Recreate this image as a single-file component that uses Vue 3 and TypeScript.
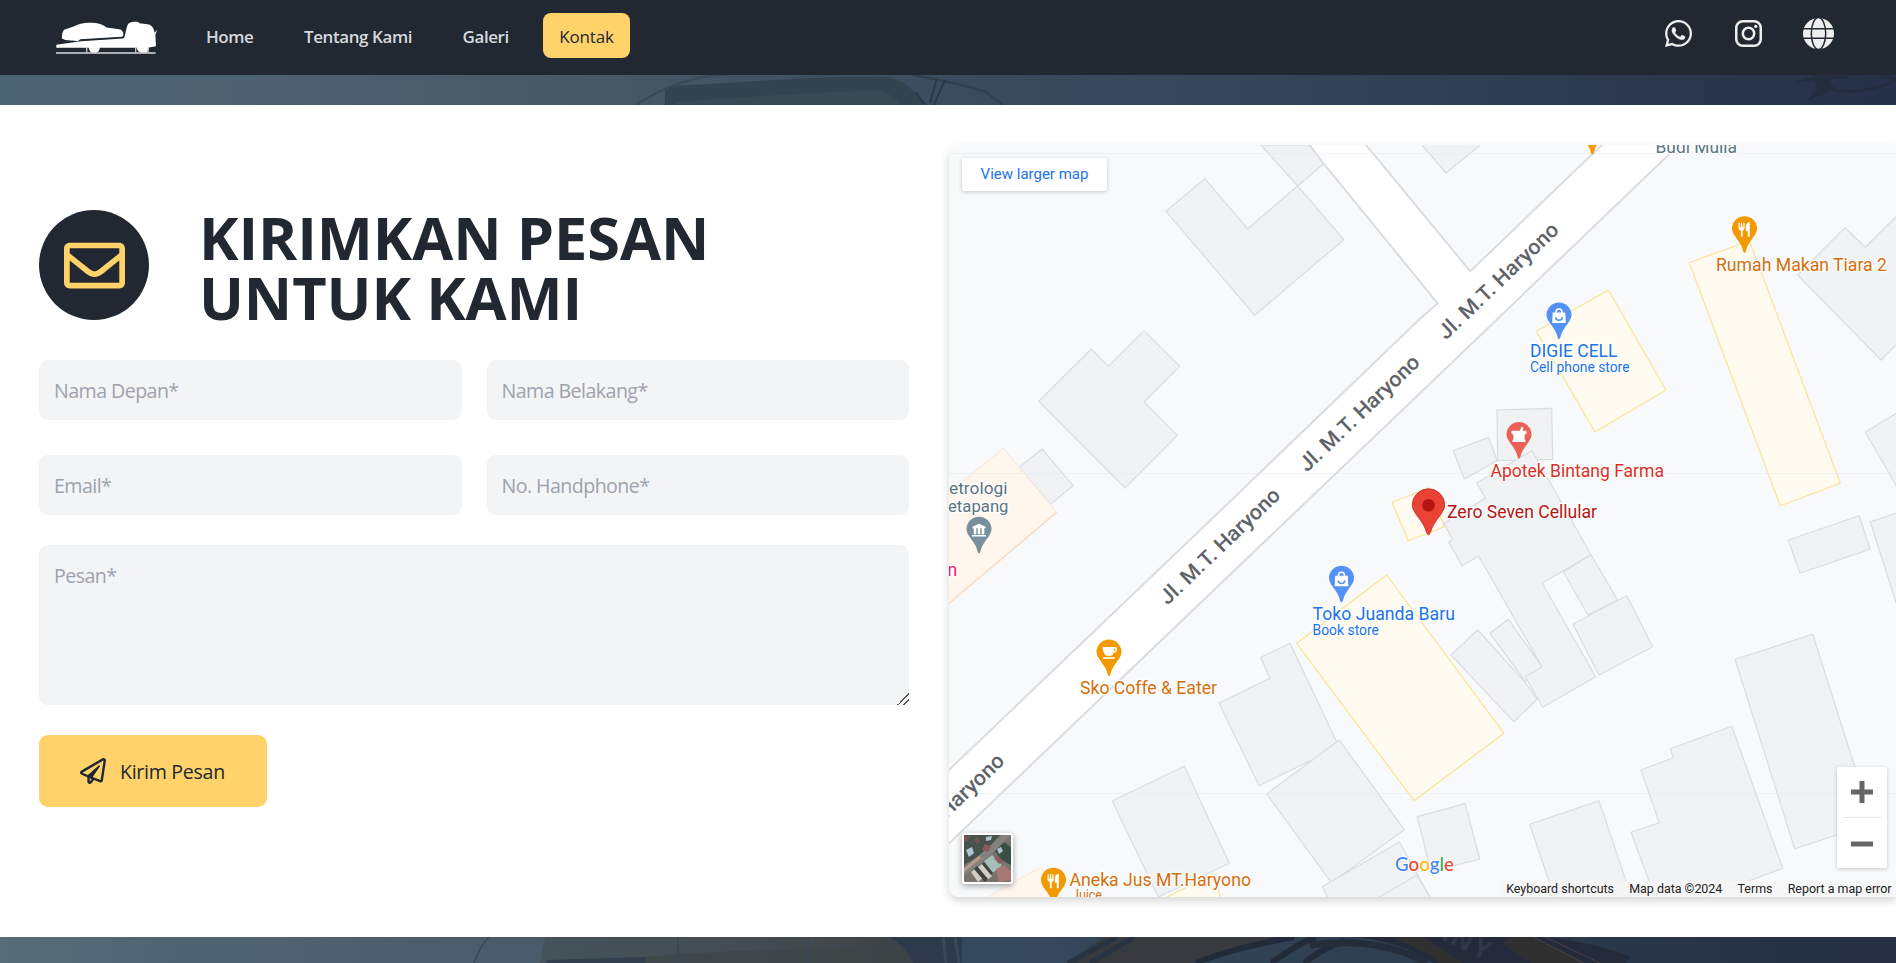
<script setup lang="ts">
interface NavItem { label: string; active?: boolean }
interface Shape { points: string; kind: 'building' | 'shop' | 'civic' }
interface Pin { x: number; y: number; tone: string; icon: 'food' | 'bag' | 'pharmacy' | 'cup' | 'museum' | 'none' }
interface Label { text: string; x: number; y: number; width: number; size: number; color: string }

const navItems: NavItem[] = [
  { label: 'Home' },
  { label: 'Tentang Kami' },
  { label: 'Galeri' },
  { label: 'Kontak', active: true },
]

const fields = [
  { name: 'first', type: 'text', placeholder: 'Nama Depan*' },
  { name: 'last', type: 'text', placeholder: 'Nama Belakang*' },
  { name: 'email', type: 'email', placeholder: 'Email*' },
  { name: 'phone', type: 'tel', placeholder: 'No. Handphone*' },
]

const shapes: Shape[] = [
  { kind: 'building', points: '1261,145 1308.7,145 1324.7,162.7 1297.7,186' },
  { kind: 'building', points: '1204.7,178.7 1247.7,228.7 1297.7,186 1343.7,239.7 1254.7,315.3 1166,211.3' },
  { kind: 'building', points: '1144,330.7 1179.7,366.3 1144,402 1177.3,435.3 1125,488 1038.7,401.3 1091.3,349 1108.3,366.3' },
  { kind: 'building', points: '1042,449 1073,485.7 1050.7,504 1019.3,467.3' },
  { kind: 'civic', points: '1003.3,448.3 1056.7,512.3 940,611 940,500' },
  { kind: 'building', points: '1422,140 1422,145 1446,173 1480.3,145 1480,140' },
  { kind: 'shop', points: '1608.3,290 1666,390 1595,432 1536.3,331.3' },
  { kind: 'building', points: '1797.7,275 1845,227.7 1865.3,247.3 1900,213 1900,341 1881,360' },
  { kind: 'shop', points: '1689.3,262.7 1749.3,240.7 1840.3,483.3 1780.3,505.7' },
  { kind: 'building', points: '1900,411 1865.3,432.3 1900,492' },
  { kind: 'building', points: '1497,410 1551.7,408.3 1552.7,459.3 1497.7,460.7' },
  { kind: 'building', points: '1453.3,450.7 1488.7,437.3 1497,460.7 1464.3,479' },
  { kind: 'shop', points: '1392,502.3 1429.3,487.7 1444.3,526.7 1408.3,540.7' },
  { kind: 'building', points: '1451,655 1477.7,630 1524.3,681.3 1537.3,699.3 1513.7,721.7' },
  { kind: 'building', points: '1490,633.3 1508.3,619.3 1542,666.7 1525.3,681.3' },
  { kind: 'building', points: '1532,450.7 1591,554.7 1542,583 1595.7,676.7 1542.7,707.3 1525.3,676.7 1542,666.7 1478.7,556 1462,565.7 1448.7,542 1452.7,539.7 1443.7,523.3 1485.3,498.3 1476.7,482.7' },
  { kind: 'building', points: '1563.3,571.7 1591,554.7 1617.7,600 1588,615' },
  { kind: 'building', points: '1573,624 1626.7,595.7 1652.7,646.7 1599,675' },
  { kind: 'building', points: '1788.3,540 1859.3,515.7 1870,549.3 1800,573.3' },
  { kind: 'building', points: '1900,512 1870.3,521.7 1900,615' },
  { kind: 'building', points: '1735,659.3 1812.7,634.3 1872.7,823.3 1794.7,848.7' },
  { kind: 'building', points: '1731.7,726.3 1782.7,868.3 1700,899 1656,899 1631,832.3 1659.3,822.7 1641,770 1673.3,757.7 1670.3,748.7' },
  { kind: 'building', points: '1529.7,824.3 1599,800.7 1632,899 1555,899' },
  { kind: 'building', points: '1417.3,816.7 1465,803.7 1479.7,859 1431,871.7' },
  { kind: 'building', points: '1260.7,657.3 1290,643.3 1339,746.7 1259,785.7 1219,703 1270,678.3' },
  { kind: 'building', points: '1266.7,794 1339.3,740 1404.3,829.7 1331.3,882.7' },
  { kind: 'building', points: '1322.3,886.7 1399.3,842 1431,899 1329,899' },
  { kind: 'building', points: '1376,899 1416.7,875.3 1431,899' },
  { kind: 'building', points: '1112.3,801 1184.3,766.3 1229.3,863.3 1158.3,897' },
  { kind: 'shop', points: '1386.7,575 1296.7,643.3 1414,800.7 1504,733.3' },
  { kind: 'shop', points: '1163,899 1213,874 1221.3,899' },
  { kind: 'civic', points: '984,899 1040.7,867.3 1060,899' },
]

const pins: Pin[] = [
  { x: 1592.3, y: 130.5, tone: '#f29900', icon: 'none' },
  { x: 1744.5, y: 228.7, tone: '#f29900', icon: 'food' },
  { x: 1559, y: 315, tone: '#5491f5', icon: 'bag' },
  { x: 1519, y: 434.5, tone: '#eb6156', icon: 'pharmacy' },
  { x: 1341.5, y: 578.2, tone: '#5491f5', icon: 'bag' },
  { x: 1109, y: 652, tone: '#f29900', icon: 'cup' },
  { x: 979, y: 529.2, tone: '#78909c', icon: 'museum' },
  { x: 1053.5, y: 880.2, tone: '#f29900', icon: 'food' },
]

const ORANGE = '#d56e0c'
const BLUE = '#1a73e8'
const labels: Label[] = [
  { text: 'Budi Mulia', x: 1655.5, y: 153.3, width: 81.5, size: 17.5, color: '#5b7581' },
  { text: 'Rumah Makan Tiara 2', x: 1716, y: 270.8, width: 171, size: 17.6, color: ORANGE },
  { text: 'DIGIE CELL', x: 1530, y: 357.3, width: 87.5, size: 17.6, color: BLUE },
  { text: 'Cell phone store', x: 1530, y: 371.6, width: 99.5, size: 13.8, color: BLUE },
  { text: 'Apotek Bintang Farma', x: 1490.5, y: 476.8, width: 173.5, size: 17.6, color: '#d93025' },
  { text: 'Zero Seven Cellular', x: 1447, y: 517.7, width: 150, size: 17.6, color: '#b31412' },
  { text: 'etrologi', x: 949, y: 494.3, width: 58.5, size: 17.4, color: '#5b7581' },
  { text: 'etapang', x: 948, y: 511.8, width: 60.5, size: 17.4, color: '#5b7581' },
  { text: 'n', x: 947.5, y: 576, width: 9.8, size: 17.6, color: '#e91e63' },
  { text: 'Toko Juanda Baru', x: 1312.5, y: 620.3, width: 142.5, size: 17.6, color: BLUE },
  { text: 'Book store', x: 1312.5, y: 634.8, width: 66.5, size: 13.8, color: BLUE },
  { text: 'Sko Coffe & Eater', x: 1080, y: 694, width: 137, size: 17.6, color: ORANGE },
  { text: 'Aneka Jus MT.Haryono', x: 1069.5, y: 885.5, width: 181.5, size: 17.6, color: ORANGE },
  { text: 'Juice', x: 1072, y: 900, width: 30, size: 13.8, color: ORANGE },
]

const streetLabels = [
  { x: 1446, y: 340.5 },
  { x: 1307, y: 472.8 },
  { x: 1167.5, y: 605.8 },
  { x: 891.5, y: 871.5 },
]

const credits = ['Keyboard shortcuts', 'Map data ©2024', 'Terms', 'Report a map error']
</script>

<template>
  <div class="page">
    <header class="navbar">
      <svg class="logo" viewBox="47 35 306 98" fill="#fff">
        <path d="M65 87 C64 76 67 64 73 60 L100 51 C115 42 135 38 158 40 C175 41 190 47 199 54 L236 59 C247 61 251 69 248 80 L244 82 L170 86 L120 89 L112 95 C100 93 80 94 73 91 Z" />
        <path d="M252 84 C256 72 258 52 263 44 C266 36 292 34 298 41 L326 45 C338 49 341 62 343 70 L351 61 L345 76 L347 110 L326 114 C326 124 321 130 309 130 C297 130 291 124 289 115 L178 115 C178 124 173 130 161 130 C151 130 147 124 145 115 L48 115 V106 L122 95 L248 87 Z" />
        <path d="M47 128 H346 V133 H47 Z" fill="#d8dade" />
        <path d="M137 114 h4 v15 h-4 Z M284 114 h4 v15 h-4 Z M321 114 h4 v15 h-4 Z" fill="#c5c8cc" />
        <path d="M122 92 L220 86" stroke="#222831" stroke-width="2" fill="none" />
      </svg>
      <nav class="links">
        <a v-for="item in navItems" :key="item.label" class="link" :class="{ active: item.active }">{{ item.label }}</a>
      </nav>
      <div class="social">
        <svg width="27" height="31" viewBox="0 0 448 512"><path d="M380.9 97.1C339 55.1 283.2 32 223.9 32c-122.4 0-222 99.6-222 222 0 39.1 10.2 77.3 29.6 111L0 480l117.7-30.9c32.4 17.7 68.9 27 106.1 27h.1c122.3 0 224.1-99.6 224.1-222 0-59.3-25.2-115-67.1-157zm-157 341.6c-33.2 0-65.7-8.9-94-25.7l-6.7-4-69.8 18.3L72 359.2l-4.4-7c-18.5-29.4-28.2-63.3-28.2-98.2 0-101.7 82.8-184.5 184.6-184.5 49.3 0 95.6 19.2 130.4 54.1 34.8 34.9 56.2 81.2 56.1 130.5 0 101.8-84.9 184.6-186.6 184.6zm101.2-138.2c-5.5-2.8-32.8-16.2-37.9-18-5.1-1.9-8.8-2.8-12.5 2.8-3.7 5.6-14.3 18-17.6 21.8-3.2 3.7-6.5 4.2-12 1.4-32.6-16.3-54-29.1-75.5-66-5.7-9.8 5.7-9.1 16.3-30.3 1.8-3.7.9-6.9-.5-9.7-1.4-2.8-12.5-30.1-17.1-41.2-4.5-10.8-9.1-9.3-12.5-9.5-3.2-.2-6.9-.2-10.6-.2-3.7 0-9.7 1.4-14.8 6.9-5.1 5.6-19.4 19-19.4 46.3 0 27.3 19.9 53.7 22.6 57.4 2.8 3.7 39.1 59.7 94.8 83.8 35.2 15.2 49 16.5 66.6 13.9 10.7-1.6 32.8-13.4 37.4-26.4 4.6-13 4.6-24.1 3.2-26.4-1.3-2.5-5-3.9-10.5-6.6z" /></svg>
        <svg width="27" height="27" viewBox="0 0 27 27">
          <rect x="1.25" y="1.25" width="24.5" height="24.5" rx="6.6" fill="none" stroke="#eee" stroke-width="2.5" />
          <circle cx="13.5" cy="13.5" r="5.7" fill="none" stroke="#eee" stroke-width="2.5" />
          <circle cx="20.7" cy="6.4" r="1.7" />
        </svg>
        <svg width="31" height="31" viewBox="0 0 31 31">
          <circle cx="15.5" cy="15.5" r="15.5" />
          <g fill="none" stroke="#222831" stroke-width="1.5">
            <ellipse cx="15.5" cy="15.5" rx="7.2" ry="16" />
            <path d="M0 10.8 H31 M0 20.3 H31" />
          </g>
        </svg>
      </div>
    </header>

    <svg class="photo photo-top" viewBox="0 75 1896 30" preserveAspectRatio="none">
      <defs>
        <linearGradient id="sky-top" x1="0" x2="1" y1="0" y2="0">
          <stop offset="0" stop-color="#4d6571" /><stop offset=".16" stop-color="#4e606d" /><stop offset=".34" stop-color="#455763" />
          <stop offset=".52" stop-color="#3a4b5e" /><stop offset=".7" stop-color="#33445a" /><stop offset=".85" stop-color="#2c394e" /><stop offset="1" stop-color="#273049" />
        </linearGradient>
      </defs>
      <rect y="75" width="1896" height="30" fill="url(#sky-top)" />
      <path d="M665 105 V90 Q666 87 674 86 C740 83 820 75 886 77 Q904 80 912 90 L928 105 Z" fill="#344350" />
      <path d="M676 105 V102 C760 96 830 91 880 91 Q892 93 900 105 Z" fill="#394a55" />
      <path d="M636 105 Q680 76 729 74" fill="none" stroke="#384a56" stroke-width="2.5" />
      <path d="M912 75 Q955 82 986 92 L1003 105" fill="none" stroke="#2f4051" stroke-width="2.5" />
      <path d="M937 78 L930 103 M945 80 L934 105 M916 92 L924 104" stroke="#2d3746" stroke-width="2" fill="none" />
      <path d="M1813 75 h20 l-3 8 6 6 -10 4 -19 8 10 -12 -2 -7 Z M1793 82 l20 -5 v4 Z" fill="#242c3f" />
      <path d="M1826 89 Q1868 96 1896 80 M1830 77 h18 M1880 76 l16 3" stroke="#232b3d" stroke-width="2.5" fill="none" />
    </svg>

    <main class="contact">
      <section class="form-side">
        <div class="heading">
          <span class="badge">
            <svg width="61" height="61" viewBox="0 0 512 512" fill="#ffd369"><path d="M464 64H48C21.49 64 0 85.49 0 112v288c0 26.51 21.49 48 48 48h416c26.51 0 48-21.49 48-48V112c0-26.51-21.49-48-48-48zm0 48v40.805c-22.422 18.259-58.168 46.651-134.587 106.49-16.841 13.247-50.201 45.072-73.413 44.701-23.208.375-56.579-31.459-73.413-44.701C106.18 199.465 70.425 171.067 48 152.805V112h416zM48 400V214.398c22.914 18.251 55.409 43.862 104.938 82.646 21.857 17.205 60.134 55.186 103.062 54.955 42.717.231 80.509-37.199 103.053-54.947 49.528-38.783 82.032-64.401 104.947-82.653V400H48z" /></svg>
          </span>
          <h1>KIRIMKAN PESAN<br />UNTUK KAMI</h1>
        </div>
        <form @submit.prevent>
          <div class="grid">
            <input v-for="f in fields" :key="f.name" class="field" :type="f.type" :name="f.name" :placeholder="f.placeholder" />
          </div>
          <textarea class="field message" name="message" placeholder="Pesan*"></textarea>
          <button class="submit" type="submit">
            <svg width="26" height="26" viewBox="0 0 512 512" fill="#222831"><path d="M440 6.5L24 246.4c-34.4 19.9-31.1 70.8 5.7 85.9L144 379.6V464c0 46.4 59.2 65.5 86.6 28.6l43.8-59.1 111.9 46.2c5.9 2.4 12.1 3.6 18.3 3.6 8.2 0 16.3-2.1 23.6-6.2 12.8-7.2 21.6-20 23.9-34.5l59.4-387.2c6.1-40.1-36.9-68.8-71.5-48.9zM192 464v-64.6l36.6 15.1L192 464zm212.6-28.7l-153.8-63.5L391 169.5c10.7-15.5-9.5-33.5-23.7-21.2L155.8 332.6 48 288 464 48l-59.4 387.3z" /></svg>
            <span>Kirim Pesan</span>
          </button>
        </form>
      </section>

      <section class="map">
        <svg class="canvas" viewBox="949 145 947 752">
          <g stroke-width="1.2" stroke-linejoin="round">
            <polygon v-for="(s, i) in shapes" :key="i" :points="s.points" :class="s.kind" />
          </g>
          <path d="M940 611 L1056.7 512.3" stroke="#f8dcc4" stroke-width="1.5" fill="none" />
          <path class="road" d="M940 778.5 L1210.7 520 L1420 318.8 L1437.7 303.3 L1324.7 165 L1306 140 H1362 L1366 145 L1470.3 271.3 L1607 140 H1684 L1416 397 L1276.7 530 L940 852 Z" />
          <path d="M949 153.5 H1896 M949 473.5 H1896 M949 793.5 H1896" stroke="#e3e5e8" stroke-width="1" opacity=".4" />

          <text v-for="(s, i) in streetLabels" :key="'s' + i" class="street" textLength="158" lengthAdjust="spacingAndGlyphs" :transform="`translate(${s.x} ${s.y}) rotate(-43.7)`">Jl. M.T. Haryono</text>

          <g v-for="(p, i) in pins" :key="'p' + i" :transform="`translate(${p.x} ${p.y})`">
            <path d="M0 -12.5 A12.5 12.5 0 0 1 12.5 0 C12.5 6.5 5 11 2 20 Q1 24.3 0 24.3 Q-1 24.3 -2 20 C-5 11 -12.5 6.5 -12.5 0 A12.5 12.5 0 0 1 0 -12.5 Z" :fill="p.tone" />
            <g v-if="p.icon === 'food'" fill="#fff">
              <path d="M-6 -6 h1.3 v4.5 h1.1 v-4.5 h1.3 v4.5 h1.1 v-4.5 h1.3 v5.5 q0 2 -1.9 2.4 v6.1 h-1.8 v-6.1 q-2.3 -.4 -2.4 -2.4 Z" />
              <path d="M5.3 -6.5 V8 H3.3 V2.5 H1.3 V-2.5 Q1.8 -6.2 5.3 -6.5 Z" />
            </g>
            <g v-else-if="p.icon === 'bag'">
              <path d="M-6.3 -2.5 H6.3 L6.8 8 H-6.8 Z" fill="#fff" />
              <path d="M-3 -2 v-1 a3 3 0 0 1 6 0 v1" fill="none" stroke="#fff" stroke-width="1.6" />
              <path d="M-3.2 2.3 a3.2 3 0 0 0 6.4 0" fill="none" :stroke="p.tone" stroke-width="1.6" />
            </g>
            <path v-else-if="p.icon === 'pharmacy'" d="M-7.5 -3.7 H1 L2 -7 L4.4 -7.8 L3.8 -3.7 H7.5 V-.9 L6 0 Q4.6 3 6.8 7.5 H-6.8 Q-4.6 3 -6 0 L-7.5 -.9 Z" fill="#fff" />
            <g v-else-if="p.icon === 'cup'" fill="#fff">
              <path fill-rule="evenodd" d="M-6.5 -5 H6 Q8 -5 8 -2.5 Q8 .5 4.5 .8 Q4 3.8 1.5 3.8 H-2 Q-5.5 3.5 -6.5 -5 Z M4.7 -3.3 V-1 H6.3 V-3.3 Z" />
              <rect x="-6" y="5.2" width="12" height="1.6" />
            </g>
            <path v-else-if="p.icon === 'museum'" d="M0 -5.5 L6.5 -2.5 V-1 H-6.5 V-2.5 Z M-5.3 -1 h2.6 v6 h-2.6 Z M-1.3 -1 h2.6 v6 h-2.6 Z M2.7 -1 h2.6 v6 h-2.6 Z M-7 5.8 h14 v1.6 h-14 Z" fill="#fff" />
          </g>

          <text v-for="l in labels" :key="l.text" class="place" :x="l.x" :y="l.y" :textLength="l.width" lengthAdjust="spacingAndGlyphs" :font-size="l.size" :fill="l.color">{{ l.text }}</text>

          <g transform="translate(1428.5 505.3)">
            <path d="M0 -16.5 A16.2 16.2 0 0 1 16.2 -.3 C16.2 8 5 15 2 27 Q1 29.5 0 29.5 Q-1 29.5 -2 27 C-5 15 -16.2 8 -16.2 -.3 A16.2 16.2 0 0 1 0 -16.5 Z" fill="#ea4335" stroke="#c5221f" stroke-width=".8" />
            <circle r="6.3" fill="#b31412" />
          </g>

          <text class="brand" x="1395" y="870.7" textLength="59" lengthAdjust="spacingAndGlyphs"><tspan fill="#4285f4">G</tspan><tspan fill="#ea4335">o</tspan><tspan fill="#fbbc04">o</tspan><tspan fill="#4285f4">g</tspan><tspan fill="#34a853">l</tspan><tspan fill="#ea4335">e</tspan></text>
        </svg>

        <a class="larger">View larger map</a>

        <svg class="satellite" viewBox="0 0 47 47">
          <rect width="47" height="47" fill="#77736f" />
          <path d="M0 0 H36 L22 16 L0 30 Z" fill="#45534b" />
          <path d="M47 12 V30 L36 24 L30 14 L40 7 Z" fill="#3a5047" />
          <path d="M-2 38 L14 26 L30 12 L46 -4" stroke="#85817f" stroke-width="7" fill="none" />
          <path d="M-2 37 L16 22" stroke="#b99a87" stroke-width="3" fill="none" />
          <path d="M20 26 L28 20 L38 30 L29 38 Z" fill="#a5beb6" />
          <path d="M14 32 l4 -3 10 12 -5 4 Z M7 37 l4 -3 8 9 -5 4 Z" fill="#d3cec4" />
          <path d="M10 34 l3 -3 11 13 -3 3 Z M18 29 l2 -2 9 11 -2 2 Z" fill="#40433f" />
          <path d="M32 34 l8 -4 7 6 v9 l-12 2 Z" fill="#a77876" />
          <path d="M30 23 l5 -2 4 6 -4 2 Z M21 9 l6 2 -3 6 -6 -2 Z" fill="#8c5c5d" />
          <path d="M2 15 l6 -3 2 6 -5 4 Z M33 14 l4 -2 2 4 -4 3 Z M22 2 l6 -1 -1 4 -5 1 Z" fill="#b4c5d2" />
          <path d="M10 4 l4 -2 2 5 -4 2 Z M0 0 l6 1 -2 5 -4 1 Z" fill="#6e5454" />
        </svg>

        <div class="zoom">
          <svg width="22" height="22" viewBox="0 0 22 22" fill="#666"><path d="M8.5 0 h5 v8.5 h8.5 v5 h-8.5 v8.5 h-5 v-8.5 h-8.5 v-5 h8.5 Z" /></svg>
          <i></i>
          <svg width="22" height="22" viewBox="0 0 22 22" fill="#666"><path d="M0 8.5 h22 v5 h-22 Z" /></svg>
        </div>

        <div class="credits"><span v-for="c in credits" :key="c">{{ c }}</span></div>
      </section>
    </main>

    <svg class="photo photo-bottom" viewBox="0 937 1896 26" preserveAspectRatio="none">
      <defs>
        <linearGradient id="sky-bottom" x1="0" x2="1" y1="0" y2="0">
          <stop offset="0" stop-color="#566c76" /><stop offset=".1" stop-color="#4f6472" /><stop offset=".28" stop-color="#4a5b69" />
          <stop offset=".5" stop-color="#364a5f" /><stop offset=".75" stop-color="#2f3e50" /><stop offset=".87" stop-color="#293548" /><stop offset="1" stop-color="#262f44" />
        </linearGradient>
        <linearGradient id="body" x1="0" x2="1" y1="0" y2="0">
          <stop offset="0" stop-color="#45525a" /><stop offset=".5" stop-color="#444d54" /><stop offset="1" stop-color="#3c4347" />
        </linearGradient>
      </defs>
      <rect y="937" width="1896" height="26" fill="url(#sky-bottom)" />
      <path d="M545 937 H889 Q904 945 913 963 H540 Z" fill="url(#body)" />
      <path d="M548 960 L645 957 V963 H545 Z" fill="#303f4b" />
      <path d="M645 963 V957 Q760 948 895 947 L907 963 Z" fill="#3c4646" opacity=".7" />
      <path d="M889 937 H962 V963 H913 Q904 945 889 937 Z" fill="#2d3a49" />
      <path d="M489 937 Q479 948 474 963 M678 937 V963 M809 937 V963 M980 937 L982 963" fill="none" stroke="#37485a" stroke-width="1.6" />
      <path d="M943 937 L946 963 M955 937 L959 963" stroke="#384858" stroke-width="3" />
      <path d="M1104 937 H1294 Q1230 948 1192 963 H1066 Z" fill="#373a3e" />
      <path d="M1117 937 L1068 963 M1134 937 L1090 963" stroke="#283342" stroke-width="5" />
      <path d="M1294 937 Q1232 948 1196 963 M1316 937 Q1304 940 1271 963 M1345 941 Q1328 945 1304 963" stroke="#222b39" stroke-width="6" fill="none" />
      <path d="M1310 945 Q1380 936 1427 963" stroke="#242d3a" stroke-width="7" fill="none" />
      <path d="M1350 937 H1545 Q1602 944 1630 957 L1626 963 H1433 Q1400 940 1350 937 Z" fill="#232a39" />
      <path d="M1390 937 H1424 L1462 963 H1440 Q1420 947 1390 937 Z M1510 937 H1530 L1585 963 H1532 L1502 944 Z" fill="#35332f" opacity=".75" />
      <path d="M1533 937 L1584 963 M1545 937 L1600 963" stroke="#443f47" stroke-width="1.2" />
      <text class="lettering" transform="translate(1430 934) rotate(26)">ANY</text>
    </svg>
  </div>
</template>

<style>
body { margin: 0; background: #fff; overflow: hidden; }
</style>

<style scoped>
.page {
  width: 1896px;
  height: 963px;
  overflow: hidden;
  font-family: "Open Sans", "Noto Sans", sans-serif;
  color: #222831;
  background: #fff;
}
.navbar {
  box-sizing: border-box;
  height: 75px;
  padding: 0 62px 0 56px;
  display: flex;
  align-items: flex-start;
  background: #222831;
}
.logo { width: 102px; height: 33px; margin-top: 21px; }
.links { display: flex; gap: 18.5px; margin: 13px 0 0 32px; }
.link {
  height: 45px;
  padding: 0 16px;
  line-height: 47px;
  font-size: 17px;
  font-weight: 600;
  letter-spacing: -0.42px;
  color: #d5d8dd;
  border-radius: 8px;
}
.link.active { background: #ffd369; color: #222831; font-weight: 500; letter-spacing: -0.2px; }
.social { height: 31px; margin: 18px 0 0 auto; display: flex; align-items: center; fill: #eee; }
.social svg + svg { margin-left: 43px; }
.social svg:last-child { margin-left: 41px; }
.photo { display: block; width: 100%; }
.photo-top { height: 30px; }
.photo-bottom { height: 26px; }
.contact { display: flex; height: 832px; }
.form-side { width: 870px; padding: 104px 40px 0 39px; }
.heading { display: flex; align-items: center; height: 112px; gap: 50px; }
.badge {
  width: 110px;
  height: 110px;
  border-radius: 50%;
  background: #222831;
  display: flex;
  align-items: center;
  justify-content: center;
}
h1 {
  margin: 4px 0 0;
  font-size: 59.5px;
  line-height: 60px;
  font-weight: 700;
  letter-spacing: -0.1px;
}
form { margin-top: 39px; }
.grid { display: grid; grid-template-columns: 1fr 1fr; gap: 35px 25px; }
.field {
  box-sizing: border-box;
  display: block;
  width: 100%;
  height: 60px;
  padding: 1px 15px 0;
  border: 0;
  border-radius: 9px;
  background: #f3f4f6;
  font: 400 19.6px "Open Sans", "Noto Sans", sans-serif;
  letter-spacing: -0.55px;
  color: #222831;
}
.field::placeholder { color: #9ca3af; opacity: 1; }
.message { height: 160px; margin-top: 30px; padding: 17px 15px; line-height: 27px; }
.message::-webkit-resizer {
  background: linear-gradient(135deg, transparent 0 60%, #555 60% 66%, transparent 66% 78%, #555 78% 84%, transparent 84%);
}
.submit {
  display: flex;
  align-items: center;
  width: 228px;
  height: 72px;
  margin-top: 30px;
  padding: 0 0 0 41px;
  gap: 14px;
  border: 0;
  border-radius: 9px;
  background: #ffd369;
  color: #222831;
  font: 500 19.6px "Open Sans", "Noto Sans", sans-serif;
  letter-spacing: -0.3px;
}
.map {
  position: relative;
  flex: 1;
  height: 752px;
  margin-top: 40px;
  border-radius: 9px 0 0 9px;
  background: #f8f9fb;
  box-shadow: 0 4px 8px rgba(0, 0, 0, 0.16);
  font-family: Roboto, sans-serif;
}
.canvas { display: block; width: 947px; height: 752px; border-radius: 9px 0 0 9px; }
.building { fill: #f1f2f4; stroke: #dadce0; }
.shop { fill: #fffbf0; stroke: #fde293; }
.civic { fill: #fff6ee; stroke: #fbeadd; }
.road { fill: #fff; stroke: #dadce0; stroke-width: 2; }
.street { font-size: 21px; font-weight: 500; fill: #5f6368; }
.place { stroke: #fff; stroke-width: 2.5px; paint-order: stroke; stroke-linejoin: round; }
.brand { font-family: Lato, sans-serif; font-size: 19.5px; font-weight: 500; stroke: #fff; stroke-width: 2px; paint-order: stroke; }
.lettering { font: 700 27px "Open Sans", sans-serif; letter-spacing: 2px; fill: #303847; }
.larger {
  position: absolute;
  left: 13px;
  top: 13px;
  width: 145px;
  height: 33px;
  border-radius: 2px;
  background: #fff;
  box-shadow: 0 1px 4px rgba(0, 0, 0, 0.2);
  text-align: center;
  font-size: 15px;
  line-height: 32px;
  color: #1a73e8;
}
.satellite {
  position: absolute;
  left: 13px;
  top: 688px;
  width: 47px;
  height: 47px;
  border: 2px solid #fff;
  border-radius: 3px;
  box-shadow: 0 2px 6px rgba(0, 0, 0, 0.35);
}
.zoom {
  position: absolute;
  right: 9px;
  top: 622px;
  width: 50px;
  height: 101px;
  border-radius: 2px;
  background: #fff;
  box-shadow: 0 1px 4px rgba(0, 0, 0, 0.2);
  display: flex;
  flex-direction: column;
  align-items: center;
  justify-content: center;
  gap: 14.5px;
}
.zoom i { width: 37px; height: 1px; background: #e2e2e2; }
.credits {
  position: absolute;
  right: 0;
  bottom: 0;
  height: 16px;
  padding: 0 4.5px 0 6px;
  display: flex;
  gap: 15.2px;
  background: rgba(245, 245, 245, 0.75);
  font-size: 12.45px;
  line-height: 16px;
  color: #222;
  white-space: nowrap;
}
</style>
